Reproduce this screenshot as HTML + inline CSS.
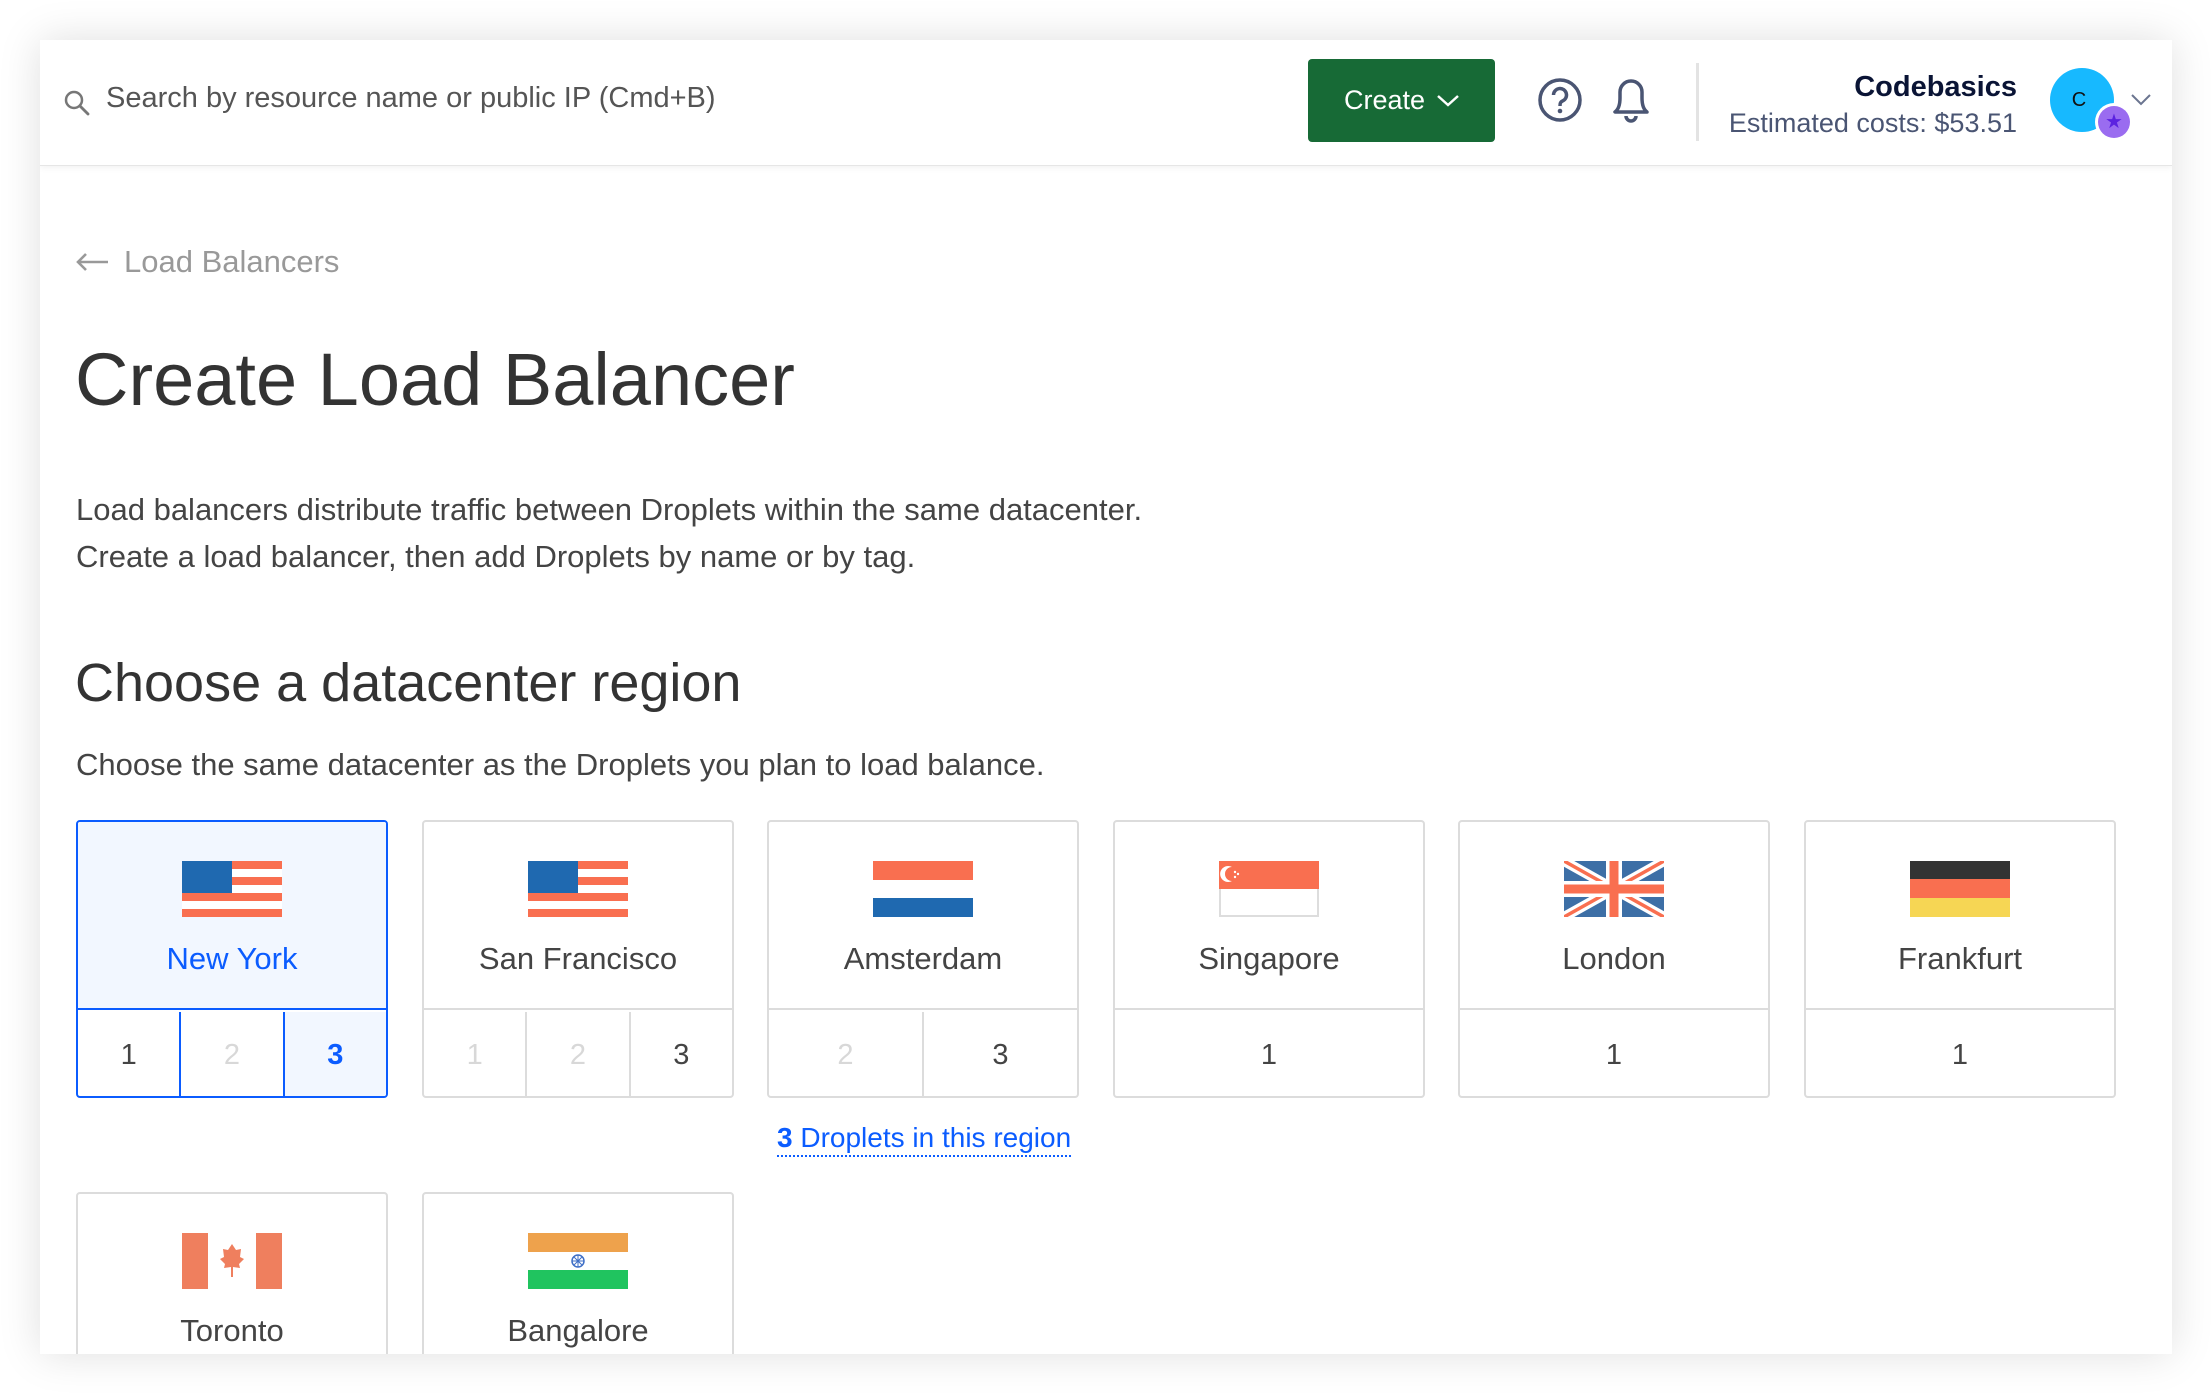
<!DOCTYPE html>
<html><head><meta charset="utf-8"><style>
*{margin:0;padding:0;box-sizing:border-box}
body{width:2212px;height:1394px;background:#fff;font-family:"Liberation Sans",sans-serif;position:relative;overflow:hidden;color:#333}
.frame{position:absolute;left:40px;top:40px;width:2132px;height:1314px;background:#fff;box-shadow:0 0 40px rgba(0,0,0,.13);overflow:hidden}
.hdr{position:absolute;left:0;top:0;width:2132px;height:126px;border-bottom:1px solid #e6e6e6;box-shadow:0 2px 6px rgba(0,0,0,.05)}
.abs{position:absolute;white-space:nowrap}
.card{position:absolute;width:312px;height:278px;border:2px solid #dcdcdc;border-radius:4px;background:#fff;overflow:hidden}
.card .top{position:absolute;left:0;top:0;width:100%;height:188px;border-bottom:2px solid #dcdcdc}
.card svg{position:absolute;left:104px;top:39px}
.card .nm{position:absolute;left:0;width:100%;top:119px;text-align:center;font-size:31px;color:#444}
.card .bot{position:absolute;left:0;top:190px;width:100%;height:86px;display:flex}
.card .bot div{flex:1;text-align:center;line-height:86px;font-size:29px;color:#444;border-left:2px solid #dcdcdc}
.card .bot div:first-child{border-left:none}
.card .bot .dis{color:#d8d8d8}
.sel{border-color:#0b5cff}
.sel .top{background:#f2f7ff;border-bottom-color:#0b5cff}
.sel .nm{color:#0b5cff}
.sel .bot div{border-left-color:#0b5cff}
</style></head><body>
<div class="frame">
 <div class="hdr">
  <svg class="abs" style="left:22px;top:48px" width="30" height="30" viewBox="0 0 30 30"><circle cx="12" cy="12" r="8" fill="none" stroke="#777" stroke-width="2.5"/><path d="M18 18l8 8" stroke="#777" stroke-width="2.8" stroke-linecap="round"/></svg>
  <div class="abs" style="left:66px;top:42px;font-size:29px;color:#555">Search by resource name or public IP (Cmd+B)</div>
  <div class="abs" style="left:1268px;top:19px;width:187px;height:83px;background:#176a36;border-radius:4px;color:#fff;font-size:27px;line-height:83px;padding-left:36px">Create<svg style="position:absolute;left:128px;top:35px" width="24" height="14" viewBox="0 0 24 14"><path d="M2 2l10 9 10-9" fill="none" stroke="#fff" stroke-width="2.5"/></svg></div>
  <svg class="abs" style="left:1497px;top:37px" width="46" height="46" viewBox="0 0 46 46"><circle cx="23" cy="23" r="20" fill="none" stroke="#4a5573" stroke-width="3.5"/><path d="M16.5 18a6.5 6.5 0 1 1 9 6c-2 1-2.5 2-2.5 5" fill="none" stroke="#4a5573" stroke-width="3.5"/><circle cx="23" cy="34" r="2.3" fill="#4a5573"/></svg>
  <svg class="abs" style="left:1568px;top:34px" width="46" height="52" viewBox="0 0 46 52"><path d="M7 38h32c-4-3-5-8-5-14v-6a11 11 0 0 0-22 0v6c0 6-1 11-5 14z" fill="none" stroke="#4a5573" stroke-width="3.5" stroke-linejoin="round"/><path d="M18 42a5 5 0 0 0 10 0" fill="none" stroke="#4a5573" stroke-width="3.5"/></svg>
  <div class="abs" style="left:1656px;top:23px;width:3px;height:78px;background:#e3e3e3"></div>
  <div class="abs" style="right:155px;top:31px;font-size:29px;font-weight:bold;color:#0a1435">Codebasics</div>
  <div class="abs" style="right:155px;top:68px;font-size:27px;color:#4a5573">Estimated costs: $53.51</div>
  <div class="abs" style="left:2010px;top:28px;width:64px;height:64px;border-radius:50%;background:#17b9ff;color:#111;font-size:20px;line-height:64px;text-align:center;padding-right:6px">C</div>
  <div class="abs" style="left:2055px;top:63px;width:38px;height:38px;border-radius:50%;background:#fff;"><div style="position:absolute;left:3px;top:3px;width:32px;height:32px;border-radius:50%;background:#9a6cf0"></div><div style="position:absolute;left:10px;top:9px;color:#5b22e0;font-size:20px;line-height:20px">★</div></div>
  <svg class="abs" style="left:2090px;top:53px" width="22" height="14" viewBox="0 0 22 14"><path d="M2 2l9 9 9-9" fill="none" stroke="#6b7590" stroke-width="2"/></svg>
 </div>
 <svg class="abs" style="left:34px;top:211px" width="36" height="22" viewBox="0 0 36 22"><path d="M34 11H4M12 3l-8 8 8 8" fill="none" stroke="#999" stroke-width="2.6"/></svg>
 <div class="abs" style="left:84px;top:204px;font-size:31px;color:#999">Load Balancers</div>
 <div class="abs" style="left:35px;top:297px;font-size:74px;color:#333">Create Load Balancer</div>
 <div class="abs" style="left:36px;top:446px;font-size:31px;color:#444;line-height:47px">Load balancers distribute traffic between Droplets within the same datacenter.<br>Create a load balancer, then add Droplets by name or by tag.</div>
 <div class="abs" style="left:35px;top:612px;font-size:54px;color:#333">Choose a datacenter region</div>
 <div class="abs" style="left:36px;top:707px;font-size:31px;color:#444">Choose the same datacenter as the Droplets you plan to load balance.</div>

 <div class="card sel" style="left:36px;top:780px"><div class="top"><svg width="100" height="56" viewBox="0 0 100 56"><rect width="100" height="56" fill="#fff"/><g fill="#f96f50"><rect width="100" height="8"/><rect y="16" width="100" height="8"/><rect y="32" width="100" height="8"/><rect y="48" width="100" height="8"/></g><rect width="50" height="32" fill="#1f69b0"/></svg><div class="nm">New York</div></div><div class="bot"><div>1</div><div class="dis">2</div><div style="background:#f2f7ff;color:#0b5cff;font-weight:bold">3</div></div></div>
 <div class="card" style="left:382px;top:780px"><div class="top"><svg width="100" height="56" viewBox="0 0 100 56"><rect width="100" height="56" fill="#fff"/><g fill="#f96f50"><rect width="100" height="8"/><rect y="16" width="100" height="8"/><rect y="32" width="100" height="8"/><rect y="48" width="100" height="8"/></g><rect width="50" height="32" fill="#1f69b0"/></svg><div class="nm">San Francisco</div></div><div class="bot"><div class="dis">1</div><div class="dis">2</div><div>3</div></div></div>
 <div class="card" style="left:727px;top:780px"><div class="top"><svg width="100" height="56" viewBox="0 0 100 56"><rect width="100" height="19" fill="#f96f50"/><rect y="37" width="100" height="19" fill="#1f69b0"/></svg><div class="nm">Amsterdam</div></div><div class="bot"><div class="dis">2</div><div>3</div></div></div>
 <div class="card" style="left:1073px;top:780px"><div class="top"><svg width="100" height="56" viewBox="0 0 100 56"><rect x="1" y="1" width="98" height="54" fill="#fff" stroke="#ddd" stroke-width="2"/><rect width="100" height="28" fill="#f96f50"/><path d="M13 6a7 7 0 1 0 0 14a8 8 0 1 1 0-14z" fill="#fff"/><circle cx="16" cy="11" r="1.2" fill="#fff"/><circle cx="19" cy="13" r="1.2" fill="#fff"/><circle cx="16" cy="16" r="1.2" fill="#fff"/></svg><div class="nm">Singapore</div></div><div class="bot"><div>1</div></div></div>
 <div class="card" style="left:1418px;top:780px"><div class="top"><svg width="100" height="56" viewBox="0 0 100 56"><rect width="100" height="56" fill="#3d6fa6"/><path d="M0 0L100 56M100 0L0 56" stroke="#fff" stroke-width="10"/><path d="M0 0L100 56M100 0L0 56" stroke="#f96f50" stroke-width="3.5"/><path d="M50 0v56M0 28h100" stroke="#fff" stroke-width="16"/><path d="M50 0v56M0 28h100" stroke="#f96f50" stroke-width="9"/></svg><div class="nm">London</div></div><div class="bot"><div>1</div></div></div>
 <div class="card" style="left:1764px;top:780px"><div class="top"><svg width="100" height="56" viewBox="0 0 100 56"><rect width="100" height="19" fill="#333"/><rect y="18" width="100" height="20" fill="#f96f50"/><rect y="37" width="100" height="19" fill="#f6d654"/></svg><div class="nm">Frankfurt</div></div><div class="bot"><div>1</div></div></div>

 <div class="abs" style="left:737px;top:1081px;font-size:28px;color:#0b5cff;border-bottom:2px dotted #0b5cff;line-height:34px"><b>3</b> Droplets in this region</div>

 <div class="card" style="left:36px;top:1152px;height:200px"><div class="top" style="border-bottom:none"><svg width="100" height="56" viewBox="0 0 100 56"><rect width="26" height="56" fill="#ef7f5e"/><rect x="74" width="26" height="56" fill="#ef7f5e"/><path d="M50 11l4 6 5-1-1 8 4 2-5 5 1 4-7-1v10h-2V34l-7 1 1-4-5-5 4-2-1-8 5 1z" fill="#ef7f5e"/></svg><div class="nm">Toronto</div></div></div>
 <div class="card" style="left:382px;top:1152px;height:200px"><div class="top" style="border-bottom:none"><svg width="100" height="56" viewBox="0 0 100 56"><rect width="100" height="19" fill="#eea24c"/><rect y="37" width="100" height="19" fill="#20c45f"/><circle cx="50" cy="28" r="6" fill="none" stroke="#3f6fc6" stroke-width="1.5"/><path d="M44 28h12M50 22v12M46 24l8 8M54 24l-8 8" stroke="#3f6fc6" stroke-width="1"/></svg><div class="nm">Bangalore</div></div></div>
</div>
</body></html>
